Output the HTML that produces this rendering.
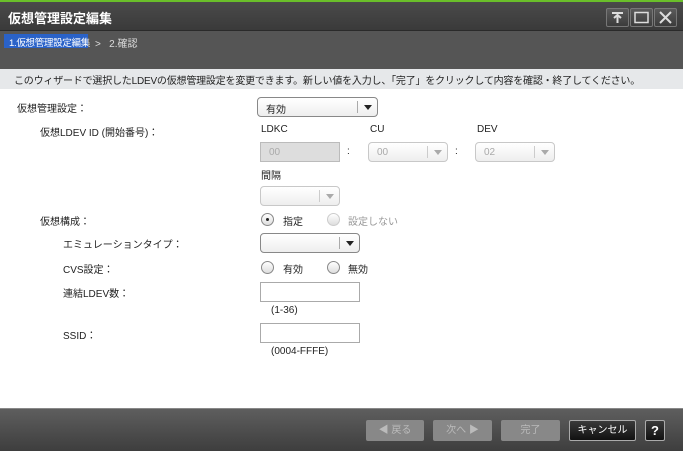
<!DOCTYPE html>
<html><head><meta charset="utf-8"><style>
*{margin:0;padding:0;box-sizing:border-box}
body{width:683px;height:451px;position:relative;overflow:hidden;background:#fff;font-family:"Liberation Sans","Noto Sans CJK JP",sans-serif;font-size:10px;color:#222}
.a{position:absolute;white-space:nowrap}
.title{left:0;top:0;width:683px;height:30px;background:linear-gradient(#4a4a4a,#3a3a3a);border-top:2px solid #6abf2a}
.title .t{left:8px;top:6px;color:#fff;font-size:13px;font-weight:bold}
.wb{top:6px;width:23px;height:19px;border:1px solid #777;border-radius:2px;background:linear-gradient(#5a5a5a,#3c3c3c)}
.step{left:0;top:30px;width:683px;height:39px;background:#555;border-top:1px solid #2a2a2a}
.inst{left:0;top:69px;width:683px;height:20px;background:#e6e8ea;font-size:10px;padding:3px 0 0 14px;letter-spacing:-0.2px}
.sel{border:1px solid #888;border-radius:4px;background:linear-gradient(#fff,#eee);height:20px}
.sel .ar{position:absolute;right:0;top:3px;width:20px;height:12px;border-left:1px solid #aaa}
.sel .ar:after{content:"";position:absolute;left:6px;top:4px;border-left:4px solid transparent;border-right:4px solid transparent;border-top:5px solid #222}
.dis{border-color:#c8c8c8}
.dis .ar{border-left-color:#ccc}.dis .ar:after{border-top-color:#aaa}
.inp{border:1px solid #aaa;background:#fff;height:20px}
.rad{width:13px;height:13px;border:1px solid #888;border-radius:50%;background:linear-gradient(#fff,#ddd)}
.foot{left:0;top:408px;width:683px;height:43px;background:linear-gradient(#5e5e5e,#3e3e3e);border-top:1px solid #888}
.fb{top:420px;height:21px;border-radius:2px;background:#888;color:#bbb;font-size:10px;text-align:center;line-height:21px}
</style></head><body>
<div class="a title"><div class="a t">仮想管理設定編集</div>
<div class="a wb" style="left:606px"><svg width="21" height="17"><path d="M5 4h11M10.5 6v8M7 9l3.5-3 3.5 3" stroke="#ddd" stroke-width="2" fill="none"/></svg></div>
<div class="a wb" style="left:630px"><svg width="21" height="17"><rect x="4" y="3.5" width="13" height="10" stroke="#ddd" stroke-width="1.5" fill="none"/></svg></div>
<div class="a wb" style="left:654px"><svg width="21" height="17"><path d="M5 3l11 11M16 3L5 14" stroke="#ddd" stroke-width="2"/></svg></div>
</div>
<div class="a step"><div class="a" style="left:4px;top:3px;width:84px;height:14px;background:#2a62c8;color:#fff;font-size:9.5px;padding:1px 0 0 5px;letter-spacing:-0.3px">1.仮想管理設定編集</div>
<div class="a" style="left:95px;top:4px;color:#ddd;font-size:10px">&gt;&nbsp;&nbsp;&nbsp;2.確認</div></div>
<div class="a inst">このウィザードで選択したLDEVの仮想管理設定を変更できます。新しい値を入力し、「完了」をクリックして内容を確認・終了してください。</div>

<div class="a" style="left:17px;top:100px">仮想管理設定：</div>
<div class="a sel" style="left:257px;top:97px;width:121px"><span class="a" style="left:8px;top:3px">有効</span><div class="ar"></div></div>
<div class="a" style="left:40px;top:124px">仮想LDEV ID (開始番号)：</div>
<div class="a" style="left:261px;top:124px">LDKC</div><div class="a" style="left:370px;top:124px">CU</div><div class="a" style="left:477px;top:124px">DEV</div>
<div class="a" style="left:260px;top:142px;width:80px;height:20px;background:#ddd;border:1px solid #bbb;color:#aaa;padding:4px 0 0 8px">00</div>
<div class="a" style="left:347px;top:146px">:</div>
<div class="a sel dis" style="left:368px;top:142px;width:80px;color:#aaa"><span class="a" style="left:8px;top:4px">00</span><div class="ar"></div></div>
<div class="a" style="left:455px;top:146px">:</div>
<div class="a sel dis" style="left:475px;top:142px;width:80px;color:#aaa"><span class="a" style="left:8px;top:4px">02</span><div class="ar"></div></div>
<div class="a" style="left:261px;top:167px">間隔</div>
<div class="a sel dis" style="left:260px;top:186px;width:80px"><div class="ar"></div></div>

<div class="a" style="left:40px;top:213px">仮想構成：</div>
<div class="a rad" style="left:261px;top:213px"><div class="a" style="left:4px;top:4px;width:3px;height:3px;background:#222;border-radius:50%"></div></div>
<div class="a" style="left:283px;top:213px">指定</div>
<div class="a rad" style="left:327px;top:213px;border-color:#ccc"></div>
<div class="a" style="left:348px;top:213px;color:#999">設定しない</div>
<div class="a" style="left:63px;top:236px">エミュレーションタイプ：</div>
<div class="a sel" style="left:260px;top:233px;width:100px"><div class="ar"></div></div>
<div class="a" style="left:63px;top:261px">CVS設定：</div>
<div class="a rad" style="left:261px;top:261px"></div><div class="a" style="left:283px;top:261px">有効</div>
<div class="a rad" style="left:327px;top:261px"></div><div class="a" style="left:348px;top:261px">無効</div>
<div class="a" style="left:63px;top:285px">連結LDEV数：</div>
<div class="a inp" style="left:260px;top:282px;width:100px"></div>
<div class="a" style="left:271px;top:305px">(1-36)</div>
<div class="a" style="left:63px;top:327px">SSID：</div>
<div class="a inp" style="left:260px;top:323px;width:100px"></div>
<div class="a" style="left:271px;top:346px">(0004-FFFE)</div>

<div class="a foot"></div>
<div class="a fb" style="left:366px;width:58px">◀ 戻る</div>
<div class="a fb" style="left:433px;width:59px">次へ ▶</div>
<div class="a fb" style="left:501px;width:59px">完了</div>
<div class="a fb" style="left:569px;width:67px;background:linear-gradient(#3a3a3a,#111);border:1px solid #aaa;color:#fff;line-height:19px">キャンセル</div>
<div class="a fb" style="left:645px;width:20px;background:linear-gradient(#3a3a3a,#111);border:1px solid #aaa;color:#fff;font-weight:bold;font-size:13px;line-height:19px">?</div>
</body></html>
